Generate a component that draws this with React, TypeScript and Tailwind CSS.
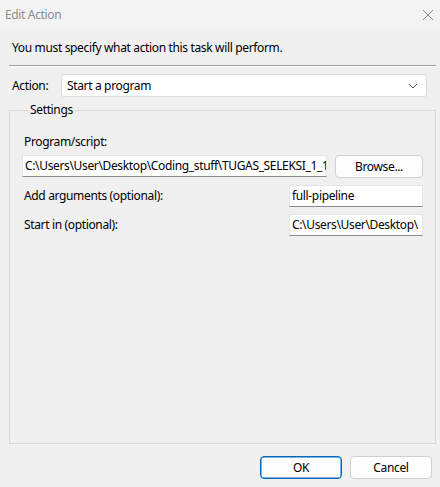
import React from 'react';

const font = "font-['Noto_Sans','Open_Sans',sans-serif] tracking-[-0.35px]";

function TextBox({ value, className }: { value: string; className: string }) {
  return (
    <div
      className={`h-[22px] bg-white border border-[#e5e5e5] border-b-[#8a8a8a] flex items-center pl-[2px] overflow-hidden whitespace-nowrap text-black ${className}`}
    >
      {value}
    </div>
  );
}

function DialogButton({ label, primary }: { label: string; primary?: boolean }) {
  return (
    <button
      className={`w-[82px] h-[23px] rounded-[4px] bg-[#fdfdfd] text-black text-[12px] leading-none ${
        primary ? 'border border-[#0067c0] shadow-[inset_0_0_0_0.5px_#0067c0]' : 'border border-[#d0d0d0]'
      }`}
    >
      {label}
    </button>
  );
}

export default function App() {
  return (
    <div className={`w-[440px] h-[487px] bg-[#f0f0f0] flex flex-col text-[12px] text-black ${font}`}>
      {/* Title bar */}
      <div className="h-[29px] bg-[#f3f3f3] flex items-center justify-between pl-[5px] pr-[5px] shrink-0">
        <span className="text-[#8c8c8c] text-[12px]">Edit Action</span>
        <svg width="12" height="12" viewBox="0 0 12 12" className="mr-[1px]">
          <path d="M1 1L11 11M11 1L1 11" stroke="#8a8a8a" strokeWidth="1" />
        </svg>
      </div>

      <div className="flex flex-col pl-[9px] pr-[4px]">
        <p className="mt-[11px] pl-[3px] leading-[16px]">You must specify what action this task will perform.</p>
        <div className="mt-[9px] h-[2px] border-t border-[#a0a0a0] border-b border-b-white" />

        {/* Action */}
        <div className="mt-[7px] flex items-center">
          <span className="pl-[3px] w-[52px]">Action:</span>
          <div className="flex-1 h-[23px] mr-[9px] bg-white border border-[#dcdcdc] rounded-[3px] flex items-center justify-between pl-[5px] pr-[8px]">
            <span>Start a program</span>
            <svg width="10" height="6" viewBox="0 0 10 6">
              <path d="M1 1L5 5L9 1" stroke="#555" strokeWidth="1" fill="none" />
            </svg>
          </div>
        </div>

        {/* Settings group */}
        <fieldset className="mt-[5px] h-[342px] border border-[#d9d9d9] px-[12px] pt-[16px]">
          <legend className="ml-[6px] px-[2px] leading-[16px]">Settings</legend>
          <div className="pl-[2px] leading-[16px]">Program/script:</div>
          <div className="mt-[3px] flex items-center">
            <TextBox value={'C:\\Users\\User\\Desktop\\Coding_stuff\\TUGAS_SELEKSI_1_1'} className="w-[305px]" />
            <button className="ml-[8px] w-[88px] h-[23px] mt-[2px] rounded-[4px] bg-[#fdfdfd] border border-[#d0d0d0] text-[12px]">
              Browse...
            </button>
          </div>
          <div className="mt-[7px] flex items-center justify-between">
            <span className="pl-[2px]">Add arguments (optional):</span>
            <TextBox value="full-pipeline" className="w-[134px]" />
          </div>
          <div className="mt-[7px] flex items-center justify-between">
            <span className="pl-[2px]">Start in (optional):</span>
            <TextBox value={'C:\\Users\\User\\Desktop\\'} className="w-[134px]" />
          </div>
        </fieldset>

        <div className="mt-[12px] mr-[4px] flex justify-end gap-[8px]">
          <DialogButton label="OK" primary />
          <DialogButton label="Cancel" />
        </div>
      </div>
    </div>
  );
}
